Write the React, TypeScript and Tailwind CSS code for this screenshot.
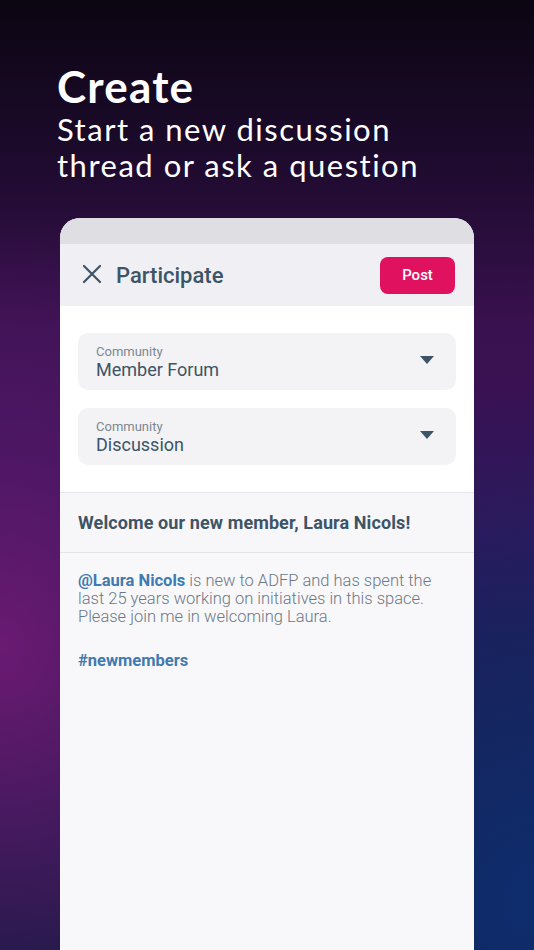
import React from "react";

export default function App() {
  return (
    <div
      className="relative w-[534px] h-[950px] overflow-hidden flex flex-col bg-[radial-gradient(ellipse_70%_45%_at_0%_68%,#6a1a72_0%,rgba(90,26,110,0.6)_45%,rgba(0,0,0,0)_100%),radial-gradient(ellipse_80%_55%_at_100%_95%,#0f2d6e_0%,rgba(15,40,100,0.7)_50%,rgba(0,0,0,0)_100%),linear-gradient(180deg,#0c0512_0%,#1b0a2a_15%,#3a1150_35%,#3a1258_55%,#251845_80%,#141a40_100%)]"
      style={{ fontFamily: "Roboto, 'Noto Sans', sans-serif" }}
    >
      <div className="pt-[62px] pl-[57px]" style={{ fontFamily: "Lato, 'Open Sans', sans-serif" }}>
        <h1 className="text-white font-bold text-[44px] leading-[48px] tracking-[1.2px]">Create</h1>
        <p className="text-white text-[31px] leading-[36px] font-normal tracking-[1.5px] mt-[1px]">
          Start a new discussion
          <br />
          thread or ask a question
        </p>
      </div>

      <div className="mt-[35px] ml-[60px] w-[414px] flex-1 flex flex-col rounded-t-[20px] overflow-hidden bg-[#f8f8fb]">
        <div className="h-[26px] bg-[#dfdee3]" />
        <div className="h-[62px] bg-[#efeff4] flex items-center pl-[22px] pr-[19px]">
          <svg width="20" height="20" viewBox="0 0 20 20" className="mt-[-2px]">
            <path d="M2 2 L18 18 M18 2 L2 18" stroke="#3d5466" strokeWidth="2.2" strokeLinecap="round" />
          </svg>
          <span className="ml-[14px] text-[22px] text-[#3d5466] font-medium tracking-[0px]">Participate</span>
          <button className="ml-auto w-[75px] h-[37px] rounded-[8px] bg-[#e0115f] text-white text-[15px] font-medium">
            Post
          </button>
        </div>
        <div className="bg-white px-[18px] pt-[27px] pb-[27px] flex flex-col gap-[18px] border-b border-[#e3e3e8]">
          {["Member Forum", "Discussion"].map((v) => (
            <div key={v} className="h-[57px] rounded-[10px] bg-[#f3f3f6] flex items-center pl-[18px] pr-[22px]">
              <div className="flex flex-col">
                <span className="text-[13px] leading-[15px] text-[#7c8792] mt-[1px]">Community</span>
                <span className="text-[18px] leading-[21px] text-[#3d5466]">{v}</span>
              </div>
              <svg width="14" height="8" viewBox="0 0 14 8" className="ml-auto mt-[-3px]">
                <path d="M0 0 L14 0 L7 8 Z" fill="#3d5466" />
              </svg>
            </div>
          ))}
        </div>
        <div className="h-[60px] bg-[#f7f7fa] border-b border-[#e3e3e8] flex items-center px-[18px]">
          <span className="text-[18px] font-bold text-[#3d5466] tracking-[0.1px]">Welcome our new member, Laura Nicols!</span>
        </div>
        <div className="px-[18px] pt-[19px]">
          <p className="text-[16.5px] leading-[18px] font-light text-[#6b7785]">
            <span className="font-bold text-[#3f7ab0]">@Laura Nicols</span> is new to ADFP and has spent the
            <br />
            last 25 years working on initiatives in this space.
            <br />
            Please join me in welcoming Laura.
          </p>
          <p className="mt-[23px] text-[16.5px] font-bold text-[#3f7ab0]">#newmembers</p>
        </div>
      </div>
    </div>
  );
}
